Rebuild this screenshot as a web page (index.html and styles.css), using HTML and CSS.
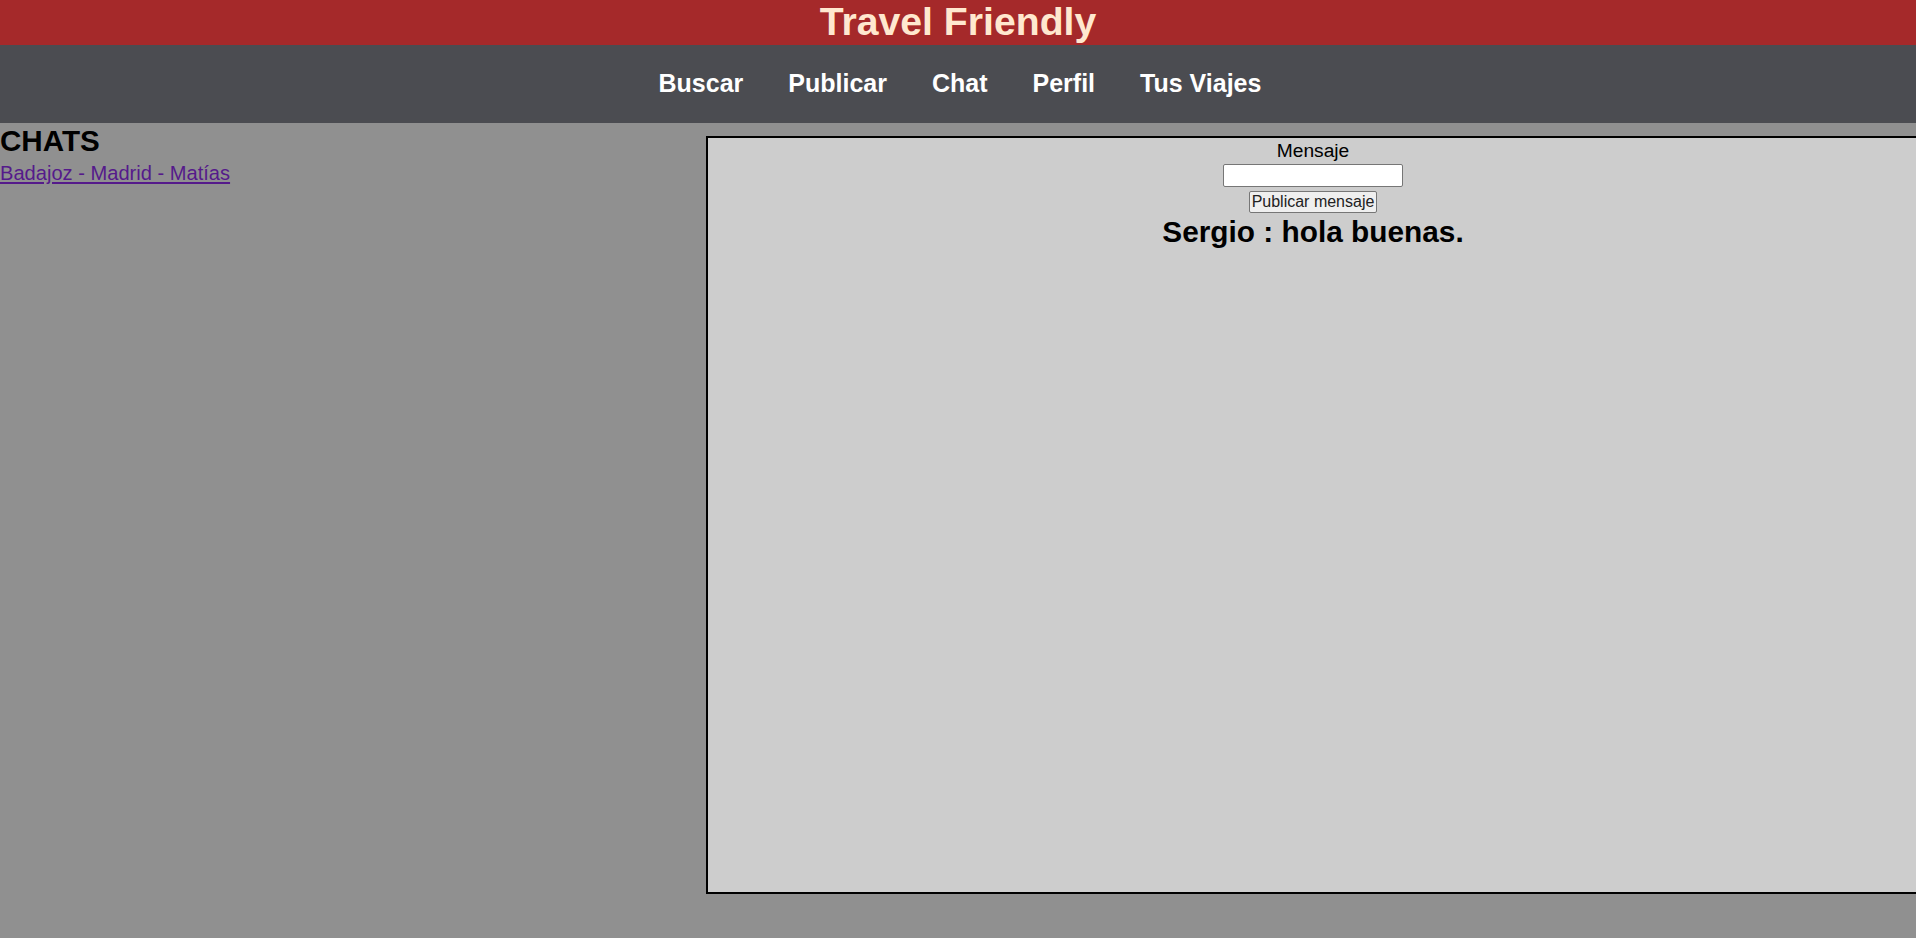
FILE: index.html
```html
<!DOCTYPE html>
<html lang="es">
<head>
<meta charset="utf-8">
<title>Travel Friendly - Chat</title>
<link rel="stylesheet" href="styles.css">
</head>
<body>
<header class="site-header">
  <h1 class="site-title">Travel Friendly</h1>
</header>
<nav class="main-nav">
  <a href="#" class="nav-link">Buscar</a>
  <a href="#" class="nav-link">Publicar</a>
  <a href="#" class="nav-link">Chat</a>
  <a href="#" class="nav-link">Perfil</a>
  <a href="#" class="nav-link">Tus Viajes</a>
</nav>
<main class="main">
  <section class="chat-list">
    <h2 class="chat-list-title">CHATS</h2>
    <a href="#" class="chat-link">Badajoz - Madrid - Matías</a>
  </section>
  <section class="chat-box">
    <form class="chat-form">
      <label class="chat-label" for="msg">Mensaje</label>
      <input class="chat-input" id="msg" type="text">
      <button class="chat-button" type="button">Publicar mensaje</button>
    </form>
    <h2 class="chat-message">Sergio : hola buenas.</h2>
  </section>
</main>
</body>
</html>
```

FILE: styles.css
```css
html {
  overflow: hidden;
}

body {
  margin: 0;
  background: #909090;
  font-family: "Liberation Sans", Arial, sans-serif;
  color: #000;
  min-height: 938px;
}

.site-header {
  background: #a5292a;
  height: 45px;
  text-align: center;
}

.site-title {
  margin: 0;
  font-size: 39.2px;
  font-weight: bold;
  color: #ffe8cf;
  line-height: 44px;
}

.main-nav {
  background: #4b4c51;
  height: 78px;
  display: flex;
  justify-content: center;
  align-items: center;
  gap: 45px;
  padding-left: 4px;
  box-sizing: border-box;
}

.nav-link {
  color: #fff;
  text-decoration: none;
  font-weight: bold;
  font-size: 25px;
  line-height: 29px;
  padding-bottom: 2px;
}

.main {
  display: flex;
  align-items: flex-start;
}

.chat-list {
  width: 706px;
  flex: none;
  padding-top: 1px;
}

.chat-list-title {
  margin: 0;
  font-size: 29.6px;
  font-weight: bold;
  line-height: 33px;
}

.chat-link {
  display: inline-block;
  margin-top: 5px;
  font-size: 20.1px;
  line-height: 22px;
  color: #551a8b;
}

.chat-box {
  flex: none;
  box-sizing: border-box;
  width: 1214px;
  height: 758px;
  margin-top: 13px;
  border: 2px solid #000;
  background: #cdcdcd;
  text-align: center;
}

.chat-form {
  display: flex;
  flex-direction: column;
  align-items: center;
  padding-top: 2px;
}

.chat-label {
  font-size: 19.2px;
  line-height: 22px;
  margin-bottom: 2px;
}

.chat-input {
  box-sizing: border-box;
  width: 180px;
  height: 23px;
  border: 1px solid #767676;
  border-radius: 2px;
  background: #fff;
  margin: 0;
}

.chat-button {
  box-sizing: border-box;
  margin-top: 4px;
  height: 22px;
  padding: 0 2px;
  white-space: nowrap;
  font-family: "Liberation Sans", Arial, sans-serif;
  font-size: 16px;
  line-height: 18px;
  color: #222;
  background: #efefef;
  border: 1px solid #767676;
  border-radius: 2px;
}

.chat-message {
  margin: 2px 0 0;
  font-size: 29.8px;
  font-weight: bold;
  line-height: 33px;
}
```
